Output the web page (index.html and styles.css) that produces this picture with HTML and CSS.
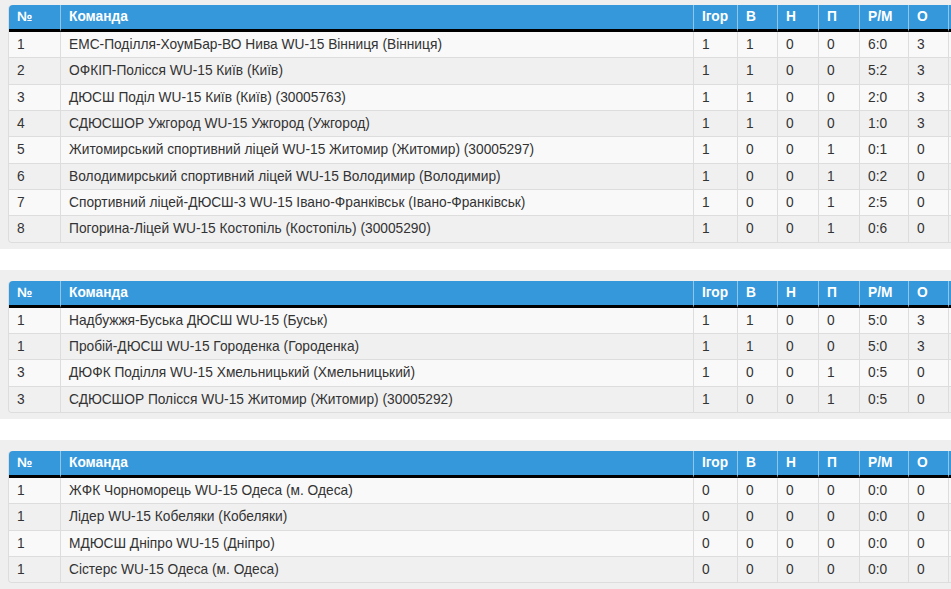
FILE: index.html
```html
<!DOCTYPE html>
<html lang="uk">
<head>
<meta charset="utf-8">
<title>Таблиці</title>
<link rel="stylesheet" href="styles.css">
</head>
<body>
<div class="page">
  <section class="panel">
    <table class="standings">
      <colgroup>
        <col class="c-num"><col class="c-team"><col class="c-games"><col class="c-w"><col class="c-d"><col class="c-l"><col class="c-goals"><col class="c-pts"><col class="c-extra">
      </colgroup>
      <thead>
        <tr><th>№</th><th>Команда</th><th>Ігор</th><th>В</th><th>Н</th><th>П</th><th>Р/М</th><th>О</th><th></th></tr>
      </thead>
      <tbody>
        <tr><td>1</td><td>ЕМС-Поділля-ХоумБар-ВО Нива WU-15 Вінниця (Вінниця)</td><td>1</td><td>1</td><td>0</td><td>0</td><td>6:0</td><td>3</td><td></td></tr>
        <tr><td>2</td><td>ОФКІП-Полісся WU-15 Київ (Київ)</td><td>1</td><td>1</td><td>0</td><td>0</td><td>5:2</td><td>3</td><td></td></tr>
        <tr><td>3</td><td>ДЮСШ Поділ WU-15 Київ (Київ) (30005763)</td><td>1</td><td>1</td><td>0</td><td>0</td><td>2:0</td><td>3</td><td></td></tr>
        <tr><td>4</td><td>СДЮСШОР Ужгород WU-15 Ужгород (Ужгород)</td><td>1</td><td>1</td><td>0</td><td>0</td><td>1:0</td><td>3</td><td></td></tr>
        <tr><td>5</td><td>Житомирський спортивний ліцей WU-15 Житомир (Житомир) (30005297)</td><td>1</td><td>0</td><td>0</td><td>1</td><td>0:1</td><td>0</td><td></td></tr>
        <tr><td>6</td><td>Володимирський спортивний ліцей WU-15 Володимир (Володимир)</td><td>1</td><td>0</td><td>0</td><td>1</td><td>0:2</td><td>0</td><td></td></tr>
        <tr><td>7</td><td>Спортивний ліцей-ДЮСШ-3 WU-15 Івано-Франківськ (Івано-Франківськ)</td><td>1</td><td>0</td><td>0</td><td>1</td><td>2:5</td><td>0</td><td></td></tr>
        <tr><td>8</td><td>Погорина-Ліцей WU-15 Костопіль (Костопіль) (30005290)</td><td>1</td><td>0</td><td>0</td><td>1</td><td>0:6</td><td>0</td><td></td></tr>
      </tbody>
    </table>
  </section>

  <section class="panel">
    <table class="standings">
      <colgroup>
        <col class="c-num"><col class="c-team"><col class="c-games"><col class="c-w"><col class="c-d"><col class="c-l"><col class="c-goals"><col class="c-pts"><col class="c-extra">
      </colgroup>
      <thead>
        <tr><th>№</th><th>Команда</th><th>Ігор</th><th>В</th><th>Н</th><th>П</th><th>Р/М</th><th>О</th><th></th></tr>
      </thead>
      <tbody>
        <tr><td>1</td><td>Надбужжя-Буська ДЮСШ WU-15 (Буськ)</td><td>1</td><td>1</td><td>0</td><td>0</td><td>5:0</td><td>3</td><td></td></tr>
        <tr><td>1</td><td>Пробій-ДЮСШ WU-15 Городенка (Городенка)</td><td>1</td><td>1</td><td>0</td><td>0</td><td>5:0</td><td>3</td><td></td></tr>
        <tr><td>3</td><td>ДЮФК Поділля WU-15 Хмельницький (Хмельницький)</td><td>1</td><td>0</td><td>0</td><td>1</td><td>0:5</td><td>0</td><td></td></tr>
        <tr><td>3</td><td>СДЮСШОР Полісся WU-15 Житомир (Житомир) (30005292)</td><td>1</td><td>0</td><td>0</td><td>1</td><td>0:5</td><td>0</td><td></td></tr>
      </tbody>
    </table>
  </section>

  <section class="panel">
    <table class="standings">
      <colgroup>
        <col class="c-num"><col class="c-team"><col class="c-games"><col class="c-w"><col class="c-d"><col class="c-l"><col class="c-goals"><col class="c-pts"><col class="c-extra">
      </colgroup>
      <thead>
        <tr><th>№</th><th>Команда</th><th>Ігор</th><th>В</th><th>Н</th><th>П</th><th>Р/М</th><th>О</th><th></th></tr>
      </thead>
      <tbody>
        <tr><td>1</td><td>ЖФК Чорноморець WU-15 Одеса (м. Одеса)</td><td>0</td><td>0</td><td>0</td><td>0</td><td>0:0</td><td>0</td><td></td></tr>
        <tr><td>1</td><td>Лідер WU-15 Кобеляки (Кобеляки)</td><td>0</td><td>0</td><td>0</td><td>0</td><td>0:0</td><td>0</td><td></td></tr>
        <tr><td>1</td><td>МДЮСШ Дніпро WU-15 (Дніпро)</td><td>0</td><td>0</td><td>0</td><td>0</td><td>0:0</td><td>0</td><td></td></tr>
        <tr><td>1</td><td>Сістерс WU-15 Одеса (м. Одеса)</td><td>0</td><td>0</td><td>0</td><td>0</td><td>0:0</td><td>0</td><td></td></tr>
      </tbody>
    </table>
  </section>
</div>
</body>
</html>
```

FILE: styles.css
```css
html, body {
  margin: 0;
  padding: 0;
  background: #ffffff;
  overflow: hidden;
}

body {
  font-family: "Liberation Sans", Arial, sans-serif;
  font-size: 13.75px;
  color: #333333;
}

.page {
  margin-top: -6px;
  display: flex;
  flex-direction: column;
  gap: 21px;
}

.panel {
  background: #efefef;
  padding: 11px 0 6px 8px;
  overflow: hidden;
}

.standings {
  table-layout: fixed;
  width: 1001px;
  border-collapse: separate;
  border-spacing: 0;
  border: 1px solid #dddddd;
  border-top: 0;
  border-radius: 4px;
}

.c-num { width: 51px; }
.c-team { width: 633px; }
.c-games { width: 44px; }
.c-w { width: 40px; }
.c-d { width: 41px; }
.c-l { width: 41px; }
.c-goals { width: 49px; }
.c-pts { width: 40px; }
.c-extra { width: 60px; }

.standings th {
  background: #3498db;
  color: #ffffff;
  font-weight: bold;
  text-align: left;
  padding: 2px 8px;
  line-height: 20px;
  border-bottom: 3px solid #000000;
  border-left: 1px solid rgba(255, 255, 255, 0.45);
  white-space: nowrap;
}

.standings th:first-child {
  border-left: 0;
  border-top-left-radius: 4px;
}

.standings td {
  padding: 3px 8px;
  line-height: 19.33px;
  border-top: 1px solid #dddddd;
  border-left: 1px solid #dddddd;
  white-space: nowrap;
  overflow: hidden;
}

.standings tbody tr:first-child td {
  border-top: 0;
}

.standings td:first-child {
  border-left: 0;
}

.standings tbody tr:nth-child(odd) td {
  background: #f9f9f9;
}

.standings tbody tr:nth-child(even) td {
  background: #f0f0f0;
}

.standings tbody tr:last-child td:first-child {
  border-bottom-left-radius: 4px;
}
```
